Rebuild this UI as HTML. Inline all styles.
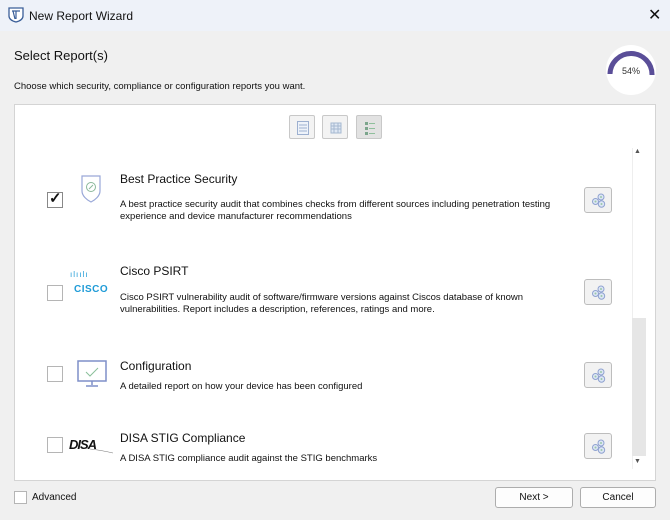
<!DOCTYPE html>
<html><head><style>
*{margin:0;padding:0;box-sizing:border-box}
body{width:670px;height:520px;background:#f0f0f0;font-family:"Liberation Sans",sans-serif;position:relative;overflow:hidden;color:#111}
.abs{position:absolute}
.tb{left:0;top:0;width:670px;height:31px;background:#eef2f9}
.panel{left:14px;top:104px;width:642px;height:377px;background:#fff;border:1px solid #d4d4d4}
.cb{width:16px;height:16px;border:1px solid #b5b5b5;background:#fff}
.t{font-size:12px}
.d{font-size:9.5px;line-height:12px}
.gb{width:28px;height:26px;border:1px solid #bdbdbd;border-radius:3px;background:#f2f2f2}
.gb svg{position:absolute;left:6px;top:5px}
.btn{height:21px;border:1px solid #adadad;border-radius:3px;background:#fdfdfd;font-size:10px;text-align:center;line-height:19px}
.vb{width:26px;height:24px;border:1px solid #c8c8c8;border-radius:2px;background:#f3f3f3}
.vb svg{position:absolute;left:7px;top:5px}
</style></head><body>
<div class="abs tb"></div>
<svg class="abs" style="left:8px;top:7px" width="16" height="16" viewBox="0 0 16 16"><path d="M1 1h14v8c0 3-3 5-7 6C4 14 1 12 1 9z" fill="#fff" stroke="#3b5f99" stroke-width="1.3"/><path d="M4 4h8M8 4v8M5 4l2 8" stroke="#3b5f99" stroke-width="1.2" fill="none"/></svg>
<div class="abs" style="left:29px;top:9px;font-size:12px">New Report Wizard</div>
<div class="abs" style="left:648px;top:5px;font-size:16px;font-weight:300">✕</div>
<div class="abs" style="left:14px;top:48px;font-size:13px">Select Report(s)</div>
<div class="abs" style="left:14px;top:81px;font-size:9.5px">Choose which security, compliance or configuration reports you want.</div>
<svg class="abs" style="left:604px;top:43px" width="54" height="54" viewBox="0 0 54 54"><circle cx="27" cy="27" r="25" fill="#fff"/><path d="M6 31A21 21 0 0 1 48 32" stroke="#5a4e98" stroke-width="5" fill="none"/><text x="27" y="31" font-size="9" text-anchor="middle" fill="#333" font-family="Liberation Sans">54%</text></svg>
<div class="abs panel"></div>
<div class="abs vb" style="left:289px;top:115px"><svg width="12" height="14"><rect x="0.5" y="0.5" width="11" height="13" fill="#eef3fa" stroke="#9db0d0"/><path d="M2 4h8M2 7h8M2 10h8" stroke="#9db0d0"/></svg></div>
<div class="abs vb" style="left:322px;top:115px"><svg width="12" height="14"><rect x="1" y="2" width="10" height="10" fill="#dfe8f4" stroke="#a5b8d0"/><path d="M1 5h10M1 8h10M4 2v10M8 2v10" stroke="#a5b8d0"/></svg></div>
<div class="abs vb" style="left:356px;top:115px;background:#e2e2e2"><svg width="12" height="14"><rect x="1" y="1" width="3" height="3" fill="#7ca58c"/><rect x="1" y="6" width="3" height="3" fill="#7ca58c"/><rect x="1" y="11" width="3" height="3" fill="#7ca58c"/><path d="M5 2.5h6M5 7.5h6M5 12.5h6" stroke="#8fbf9c"/></svg></div>
<div class="abs" style="left:632px;top:148px;width:14px;height:321px;background:#fff;border-left:1px solid #eee"></div>
<div class="abs" style="left:632px;top:318px;width:14px;height:138px;background:#e6e6e6"></div>
<div class="abs" style="left:634px;top:148px;font-size:7px;color:#555">▲</div>
<div class="abs" style="left:634px;top:458px;font-size:7px;color:#555">▼</div>

<div class="abs cb" style="left:47px;top:192px;border-color:#888"></div>
<div class="abs" style="left:49px;top:189px;font-size:15px;font-weight:bold">✓</div>
<svg class="abs" style="left:80px;top:174px" width="22" height="30" viewBox="0 0 22 30"><path d="M2 2h18v15c0 5-5 9-9 11C7 26 2 22 2 17z" fill="#fff" stroke="#9aa8d8" stroke-width="1.2"/><circle cx="11" cy="13" r="4.5" fill="none" stroke="#8ab89a"/><path d="M9 15l4-4" stroke="#8ab89a"/></svg>
<div class="abs t" style="left:120px;top:172px">Best Practice Security</div>
<div class="abs d" style="left:120px;top:199px">A best practice security audit that combines checks from different sources including penetration testing<br>experience and device manufacturer recommendations</div>
<div class="abs gb" style="left:584px;top:187px"><svg width="16" height="16"><g fill="#dde6f5" stroke="#8fa2d0"><circle cx="10" cy="4" r="3"/><circle cx="4.5" cy="8.5" r="3"/><circle cx="10.5" cy="11" r="3.2"/></g><g fill="#9ac8a8"><circle cx="10" cy="4" r="1"/><circle cx="4.5" cy="8.5" r="1"/><circle cx="10.5" cy="11" r="1"/></g></svg></div>

<div class="abs cb" style="left:47px;top:285px"></div>
<div class="abs" style="left:70px;top:270px;color:#1f9bd7;font-size:8px;letter-spacing:1px">ılıılı</div>
<div class="abs" style="left:74px;top:284px;color:#1f9bd7;font-size:10px;font-weight:bold;letter-spacing:0.5px">CISCO</div>
<div class="abs t" style="left:120px;top:264px">Cisco PSIRT</div>
<div class="abs d" style="left:120px;top:292px">Cisco PSIRT vulnerability audit of software/firmware versions against Ciscos database of known<br>vulnerabilities. Report includes a description, references, ratings and more.</div>
<div class="abs gb" style="left:584px;top:279px"><svg width="16" height="16"><g fill="#dde6f5" stroke="#8fa2d0"><circle cx="10" cy="4" r="3"/><circle cx="4.5" cy="8.5" r="3"/><circle cx="10.5" cy="11" r="3.2"/></g><g fill="#9ac8a8"><circle cx="10" cy="4" r="1"/><circle cx="4.5" cy="8.5" r="1"/><circle cx="10.5" cy="11" r="1"/></g></svg></div>

<div class="abs cb" style="left:47px;top:366px"></div>
<svg class="abs" style="left:77px;top:360px" width="30" height="30" viewBox="0 0 30 30"><rect x="1" y="1" width="28" height="20" fill="#fff" stroke="#7f8fc8" stroke-width="1.5"/><path d="M9 12l4 4 8-8" stroke="#8ac09a" fill="none"/><path d="M15 21v4M9 26h12" stroke="#7f8fc8" stroke-width="1.5"/></svg>
<div class="abs t" style="left:120px;top:359px">Configuration</div>
<div class="abs d" style="left:120px;top:381px">A detailed report on how your device has been configured</div>
<div class="abs gb" style="left:584px;top:362px"><svg width="16" height="16"><g fill="#dde6f5" stroke="#8fa2d0"><circle cx="10" cy="4" r="3"/><circle cx="4.5" cy="8.5" r="3"/><circle cx="10.5" cy="11" r="3.2"/></g><g fill="#9ac8a8"><circle cx="10" cy="4" r="1"/><circle cx="4.5" cy="8.5" r="1"/><circle cx="10.5" cy="11" r="1"/></g></svg></div>

<div class="abs cb" style="left:47px;top:437px"></div>
<div class="abs" style="left:69px;top:437px;font-size:13px;font-weight:bold;font-style:italic;letter-spacing:-1px">DISA</div>
<svg class="abs" style="left:90px;top:448px" width="24" height="6"><path d="M0 1Q10 2 23 5" stroke="#777" stroke-width="0.6" fill="none"/></svg>
<div class="abs t" style="left:120px;top:431px">DISA STIG Compliance</div>
<div class="abs d" style="left:120px;top:453px">A DISA STIG compliance audit against the STIG benchmarks</div>
<div class="abs gb" style="left:584px;top:433px"><svg width="16" height="16"><g fill="#dde6f5" stroke="#8fa2d0"><circle cx="10" cy="4" r="3"/><circle cx="4.5" cy="8.5" r="3"/><circle cx="10.5" cy="11" r="3.2"/></g><g fill="#9ac8a8"><circle cx="10" cy="4" r="1"/><circle cx="4.5" cy="8.5" r="1"/><circle cx="10.5" cy="11" r="1"/></g></svg></div>

<div class="abs cb" style="left:14px;top:491px;width:13px;height:13px"></div>
<div class="abs" style="left:32px;top:492px;font-size:10px">Advanced</div>
<div class="abs btn" style="left:495px;top:487px;width:78px">Next &gt;</div>
<div class="abs btn" style="left:580px;top:487px;width:76px">Cancel</div>
</body></html>
